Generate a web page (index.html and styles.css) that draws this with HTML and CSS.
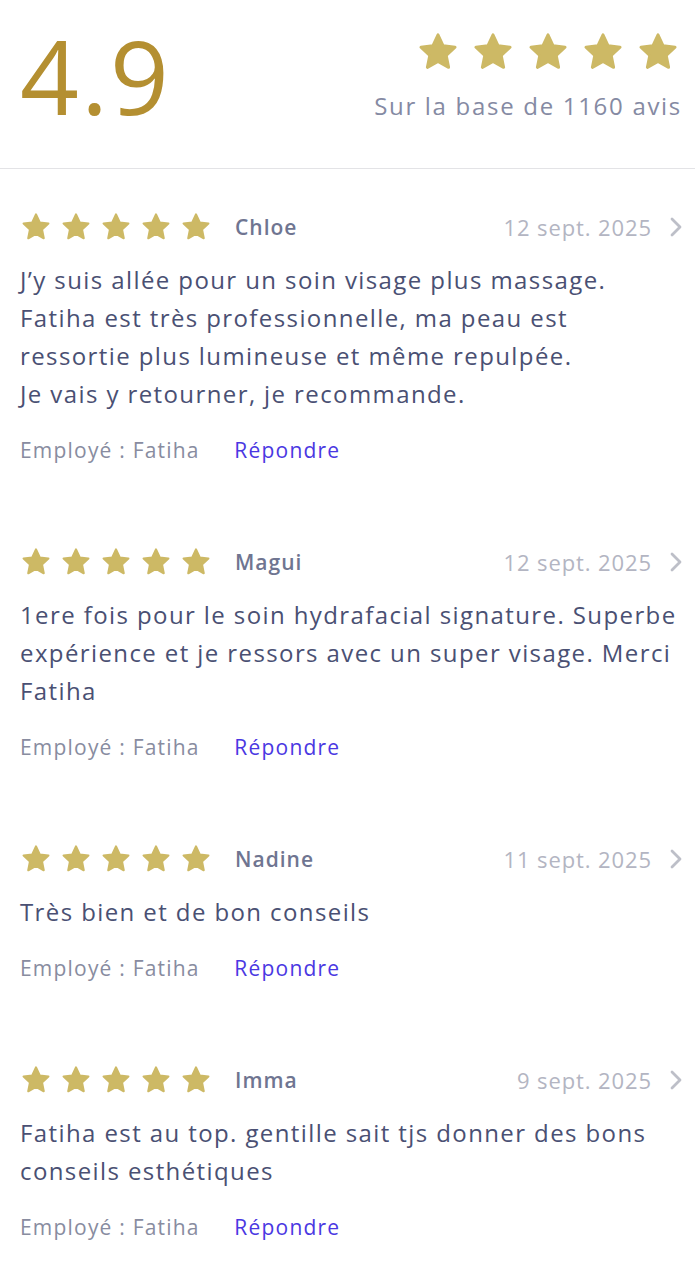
FILE: index.html
```html
<!DOCTYPE html>
<html lang="fr">
<head>
    <meta charset="UTF-8">
    <meta name="viewport" content="width=device-width, initial-scale=1.0">
    <link rel="stylesheet" href="styles.css">
    <title>Avis</title>
</head>
<body>
    <svg width="0" height="0" style="position:absolute">
        <defs>
            <path id="star" d="M12 2.6l2.8 6 6.5.8-4.8 4.5 1.3 6.5L12 17.2l-5.8 3.2 1.3-6.5-4.8-4.5 6.5-.8z"/>
        </defs>
    </svg>
    <header class="summary">
        <div class="score">4.9</div>
        <div class="summary-right">
            <div class="stars stars-big" id="bigStars"></div>
            <div class="summary-count">Sur la base de 1160 avis</div>
        </div>
    </header>
    <ul class="review-list" id="reviewList">
        <!-- reviews are added here -->
    </ul>
    <script>
        const reviews = [
            {
                name: 'Chloe',
                date: '12 sept. 2025',
                text: 'J’y suis allée pour un soin visage plus massage. Fatiha est très professionnelle, ma peau est ressortie plus lumineuse et même repulpée.<br>Je vais y retourner, je recommande.',
                employee: 'Fatiha'
            },
            {
                name: 'Magui',
                date: '12 sept. 2025',
                text: '1ere fois pour le soin hydrafacial signature. Superbe expérience et je ressors avec un super visage. Merci Fatiha',
                employee: 'Fatiha'
            },
            {
                name: 'Nadine',
                date: '11 sept. 2025',
                text: 'Très bien et de bon conseils',
                employee: 'Fatiha'
            },
            {
                name: 'Imma',
                date: '9 sept. 2025',
                text: 'Fatiha est au top. gentille sait tjs donner des bons conseils esthétiques',
                employee: 'Fatiha'
            }
        ];

        function starRow(count) {
            let html = '';
            for (let i = 0; i < count; i++) {
                html += '<svg class="star" viewBox="0 0 24 24"><use href="#star"/></svg>';
            }
            return html;
        }

        function renderReviews() {
            document.getElementById('bigStars').innerHTML = starRow(5);
            const list = document.getElementById('reviewList');
            reviews.forEach(review => {
                const item = document.createElement('li');
                item.className = 'review';
                item.innerHTML = `
                    <div class="review-head">
                        <div class="stars stars-small">${starRow(5)}</div>
                        <span class="review-name">${review.name}</span>
                        <span class="review-date">${review.date}</span>
                        <svg class="chevron" viewBox="0 0 14 22"><path d="M3 3l8 8-8 8"/></svg>
                    </div>
                    <p class="review-text">${review.text}</p>
                    <div class="review-foot">
                        <span class="review-employee">Employé : ${review.employee}</span>
                        <a href="#" class="review-reply">Répondre</a>
                    </div>
                `;
                list.appendChild(item);
            });
        }

        renderReviews();
    </script>
</body>
</html>
```

FILE: styles.css
```css
body {
    margin: 0;
    padding: 0;
    background: #fff;
    font-family: "Open Sans", Lato, sans-serif;
    color: #4a5073;
}
.summary {
    display: flex;
    justify-content: space-between;
    align-items: flex-start;
    padding: 16px 15px 0 20px;
    height: 152px;
    border-bottom: 1px solid #e3e3e6;
}
.score {
    font-size: 103px;
    line-height: 1;
    letter-spacing: 2px;
    color: #b48f31;
    font-weight: 400;
    margin-top: 8px;
}
.summary-right {
    display: flex;
    flex-direction: column;
    align-items: flex-end;
}
.stars {
    display: flex;
}
.star {
    fill: #cdb965;
    stroke: #cdb965;
    stroke-width: 1.6;
    stroke-linejoin: round;
}
.stars-big {
    gap: 11px;
    margin-top: 14px;
}
.stars-big .star {
    width: 44px;
    height: 44px;
}
.summary-count {
    margin-top: 15px;
    margin-right: -2px;
    font-size: 24px;
    letter-spacing: 1.7px;
    color: #858aa3;
}
.review-list {
    list-style: none;
    margin: 0;
    padding: 0;
}
.review {
    padding: 41px 8px 41px 20px;
}
.review-head {
    display: flex;
    align-items: center;
    height: 34px;
}
.stars-small {
    gap: 8px;
}
.stars-small .star {
    width: 32px;
    height: 32px;
}
.review-name {
    margin-left: 23px;
    font-size: 21px;
    font-weight: 600;
    letter-spacing: 1px;
    color: #6f7591;
}
.review-date {
    margin-left: auto;
    font-size: 22px;
    letter-spacing: 0.9px;
    color: #b3b5c2;
}
.chevron {
    width: 14px;
    height: 22px;
    margin-left: 17px;
    margin-right: 4px;
    fill: none;
    stroke: #bdbfc8;
    stroke-width: 2.8;
    stroke-linecap: round;
    stroke-linejoin: round;
}
.review-text {
    margin: 17px 5px 0 0;
    font-size: 24px;
    line-height: 38px;
    letter-spacing: 1.4px;
}
.review-foot {
    margin-top: 24px;
    font-size: 21px;
    line-height: 26px;
    letter-spacing: 1.2px;
}
.review-employee {
    color: #888ca0;
}
.review-reply {
    margin-left: 28px;
    color: #4a37e2;
    text-decoration: none;
}
```
